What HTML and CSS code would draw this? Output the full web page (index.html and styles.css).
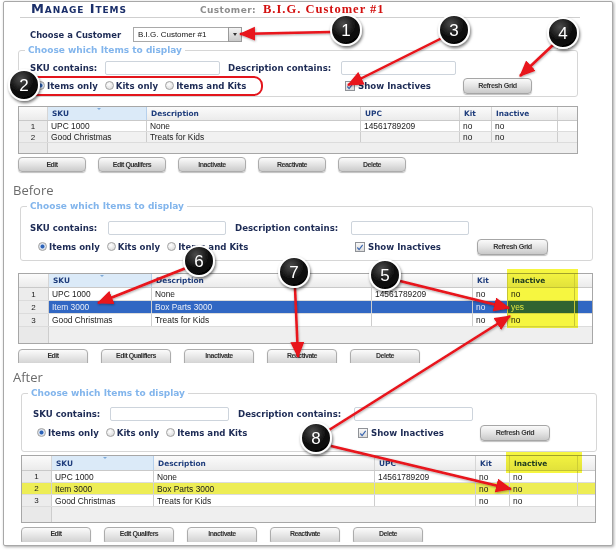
FILE: index.html
```html
<!DOCTYPE html>
<html>
<head>
<meta charset="utf-8">
<link rel="stylesheet" href="styles.css">
</head>
<body>
<div class="frame">
  <div class="titlebar">
    <div class="title">Manage Items</div>
    <div class="cust-lbl">Customer:</div>
    <div class="cust-name">B.I.G. Customer #1</div>
  </div>
  <div class="cust-row">
    <div class="cust-choose">Choose a Customer</div>
    <div class="select"><span class="select-txt">B.I.G. Customer #1</span><span class="select-btn"></span></div>
  </div>

  <fieldset class="filter f1">
    <legend>Choose which Items to display</legend>
    <div class="frow1">
      <span class="lbl lbl-sku">SKU contains:</span><span class="tin"></span>
      <span class="lbl lbl-desc">Description contains:</span><span class="tin"></span>
    </div>
    <div class="frow2">
      <div class="radios">
        <span class="opt"><span class="radio on"></span><span class="lbl">Items only</span></span>
        <span class="opt"><span class="radio"></span><span class="lbl">Kits only</span></span>
        <span class="opt"><span class="radio"></span><span class="lbl">Items and Kits</span></span>
      </div>
      <div class="chk"><span class="cbox"><svg width="9" height="9" viewBox="0 0 9 9"><path d="M1.5 4.5 L3.5 6.8 L7.5 1.5" fill="none" stroke="#3a66b0" stroke-width="1.3"/></svg></span><span class="lbl">Show Inactives</span></div>
      <div class="rbtn">Refresh Grid</div>
    </div>
  </fieldset>

  <div class="grid g1">
    <div class="grow ghead"><span></span><span class="skuh">SKU</span><span>Description</span><span>UPC</span><span>Kit</span><span>Inactive</span><span></span></div>
    <div class="grow"><span class="num">1</span><span>UPC 1000</span><span>None</span><span>14561789209</span><span>no</span><span>no</span><span></span></div>
    <div class="grow alt"><span class="num">2</span><span>Good Christmas</span><span>Treats for Kids</span><span></span><span>no</span><span>no</span><span></span></div>
    <div class="gempty"><span class="num"></span><span></span></div>
  </div>

  <div class="btns b1">
    <div class="btn">Edit</div><div class="btn">Edit Qualifers</div><div class="btn">Inactivate</div><div class="btn">Reactivate</div><div class="btn">Delete</div>
  </div>

  <div class="stitle">Before</div>

  <fieldset class="filter f2">
    <legend>Choose which Items to display</legend>
    <div class="frow1">
      <span class="lbl lbl-sku">SKU contains:</span><span class="tin"></span>
      <span class="lbl lbl-desc">Description contains:</span><span class="tin"></span>
    </div>
    <div class="frow2">
      <div class="radios">
        <span class="opt"><span class="radio on"></span><span class="lbl">Items only</span></span>
        <span class="opt"><span class="radio"></span><span class="lbl">Kits only</span></span>
        <span class="opt"><span class="radio"></span><span class="lbl">Items and Kits</span></span>
      </div>
      <div class="chk"><span class="cbox"><svg width="9" height="9" viewBox="0 0 9 9"><path d="M1.5 4.5 L3.5 6.8 L7.5 1.5" fill="none" stroke="#3a66b0" stroke-width="1.3"/></svg></span><span class="lbl">Show Inactives</span></div>
      <div class="rbtn">Refresh Grid</div>
    </div>
  </fieldset>

  <div class="grid g2">
    <div class="grow ghead"><span></span><span class="skuh">SKU</span><span>Description</span><span>UPC</span><span>Kit</span><span>Inactive</span><span></span></div>
    <div class="grow"><span class="num">1</span><span>UPC 1000</span><span>None</span><span>14561789209</span><span>no</span><span>no</span><span></span></div>
    <div class="grow sel"><span class="num">2</span><span>Item 3000</span><span>Box Parts 3000</span><span></span><span>no</span><span>yes</span><span></span></div>
    <div class="grow"><span class="num">3</span><span>Good Christmas</span><span>Treats for Kids</span><span></span><span>no</span><span>no</span><span></span></div>
    <div class="gempty"><span class="num"></span><span></span></div>
    <div class="ycol yc2"></div>
  </div>

  <div class="btns b2 clip">
    <div class="btn">Edit</div><div class="btn">Edit Qualifiers</div><div class="btn">Inactivate</div><div class="btn">Reactivate</div><div class="btn">Delete</div>
  </div>

  <div class="stitle st2">After</div>

  <fieldset class="filter f3">
    <legend>Choose which Items to display</legend>
    <div class="frow1">
      <span class="lbl lbl-sku">SKU contains:</span><span class="tin"></span>
      <span class="lbl lbl-desc">Description contains:</span><span class="tin"></span>
    </div>
    <div class="frow2">
      <div class="radios">
        <span class="opt"><span class="radio on"></span><span class="lbl">Items only</span></span>
        <span class="opt"><span class="radio"></span><span class="lbl">Kits only</span></span>
        <span class="opt"><span class="radio"></span><span class="lbl">Items and Kits</span></span>
      </div>
      <div class="chk"><span class="cbox"><svg width="9" height="9" viewBox="0 0 9 9"><path d="M1.5 4.5 L3.5 6.8 L7.5 1.5" fill="none" stroke="#3a66b0" stroke-width="1.3"/></svg></span><span class="lbl">Show Inactives</span></div>
      <div class="rbtn">Refresh Grid</div>
    </div>
  </fieldset>

  <div class="grid g3">
    <div class="grow ghead"><span></span><span class="skuh">SKU</span><span>Description</span><span>UPC</span><span>Kit</span><span>Inactive</span><span></span></div>
    <div class="grow"><span class="num">1</span><span>UPC 1000</span><span>None</span><span>14561789209</span><span>no</span><span>no</span><span></span></div>
    <div class="grow hl"><span class="num">2</span><span>Item 3000</span><span>Box Parts 3000</span><span></span><span>no</span><span>no</span><span></span></div>
    <div class="grow"><span class="num">3</span><span>Good Christmas</span><span>Treats for Kids</span><span></span><span>no</span><span>no</span><span></span></div>
    <div class="gempty"><span class="num"></span><span></span></div>
    <div class="ycol yc3"></div>
  </div>

  <div class="btns b3 clip">
    <div class="btn">Edit</div><div class="btn">Edit Qualifers</div><div class="btn">Inactivate</div><div class="btn">Reactivate</div><div class="btn">Delete</div>
  </div>
</div>

<svg class="overlay" width="616" height="550" viewBox="0 0 616 550">
  <defs>
    <radialGradient id="cg" cx="40%" cy="30%" r="75%">
      <stop offset="0" stop-color="#4d4d4d"/>
      <stop offset="0.55" stop-color="#111"/>
      <stop offset="1" stop-color="#000"/>
    </radialGradient>
    <marker id="ah" markerUnits="userSpaceOnUse" markerWidth="17" markerHeight="15" refX="15" refY="7" orient="auto">
      <path d="M0,0 L16,7 L0,14 z" fill="#e8121a"/>
    </marker>
    <filter id="sh" x="-40%" y="-40%" width="180%" height="180%">
      <feDropShadow dx="1" dy="2" stdDeviation="1.5" flood-color="#000" flood-opacity="0.55"/>
    </filter>
    <filter id="ash" x="-10%" y="-10%" width="120%" height="120%">
      <feDropShadow dx="0.5" dy="1" stdDeviation="0.8" flood-color="#000" flood-opacity="0.35"/>
    </filter>
  </defs>
  <rect x="20" y="77" width="242" height="18" rx="8" fill="none" stroke="#e3151c" stroke-width="2"/>
  <g stroke="#e8121a" stroke-width="2.5" fill="none" marker-end="url(#ah)" filter="url(#ash)">
    <line x1="331" y1="32" x2="240" y2="34"/>
    <line x1="442" y1="38" x2="348" y2="85"/>
    <line x1="554" y1="44" x2="520" y2="76"/>
    <line x1="186" y1="268" x2="98" y2="303"/>
    <line x1="295" y1="288" x2="298" y2="357"/>
    <line x1="400" y1="281" x2="509" y2="308"/>
    <line x1="329" y1="430" x2="510" y2="316"/>
    <line x1="331" y1="446" x2="511" y2="489"/>
  </g>
  <g filter="url(#sh)" class="callouts">
    <circle cx="346" cy="30" r="15"/>
    <circle cx="454" cy="30" r="15"/>
    <circle cx="563" cy="33" r="15"/>
    <circle cx="24" cy="85" r="15"/>
    <circle cx="199" cy="261" r="15"/>
    <circle cx="294" cy="272" r="15"/>
    <circle cx="385" cy="275" r="15"/>
    <circle cx="316" cy="438" r="15"/>
  </g>
  <g class="cnum">
    <text x="346" y="36">1</text>
    <text x="454" y="36">3</text>
    <text x="563" y="39">4</text>
    <text x="24" y="91">2</text>
    <text x="199" y="267">6</text>
    <text x="294" y="278">7</text>
    <text x="385" y="281">5</text>
    <text x="316" y="444">8</text>
  </g>
</svg>
</body>
</html>
```

FILE: styles.css
```css
* { box-sizing: border-box; }
html, body { margin: 0; padding: 0; background: #fff; }
body {
  position: relative;
  width: 616px;
  height: 550px;
  overflow: hidden;
  font-family: "DejaVu Sans", Verdana, sans-serif;
}

.frame {
  margin: 1px 0 0 3px;
  width: 610px;
  height: 545px;
  border: 1px solid #a8a8a8;
  border-radius: 2px;
  background: #fff;
  box-shadow: 1px 1px 3px rgba(0,0,0,0.35);
  overflow: hidden;
}

/* ---------- title ---------- */
.titlebar {
  display: flex;
  align-items: flex-end;
  margin-left: 16px;
  width: 560px;
  height: 16px;
  border-bottom: 1px solid #cfcfcf;
  padding-bottom: 1px;
}
.title {
  width: 180px;
  padding-left: 11px;
  font: bold 13px/14px "DejaVu Sans", sans-serif;
  font-variant: small-caps;
  letter-spacing: 0.9px;
  color: #1b2f6a;
}
.cust-lbl {
  width: 63px;
  font: bold 9px/12px "DejaVu Sans", sans-serif;
  letter-spacing: 0.4px;
  color: #8d8d8d;
}
.cust-name {
  font: bold 12.5px/13px "Liberation Serif", serif;
  letter-spacing: 1px;
  color: #d3100f;
}

.cust-row {
  display: flex;
  align-items: center;
  margin: 9px 0 0 26px;
  height: 15px;
}
.cust-choose {
  width: 103px;
  font: bold 8.4px "DejaVu Sans", sans-serif;
  color: #1d2b55;
}
.select {
  display: flex;
  height: 15px;
}
.select-txt {
  width: 95px;
  height: 15px;
  border: 1px solid #a9a9a9;
  border-right: none;
  background: #fff;
  font: 8px/13px "Liberation Sans", sans-serif;
  color: #111;
  padding-left: 4px;
}
.select-btn {
  position: relative;
  width: 14px;
  height: 15px;
  border: 1px solid #9a9a9a;
  background: linear-gradient(#f4f4f4, #c9c9c9);
}
.select-btn::after {
  content: "";
  position: absolute;
  left: 4px;
  top: 5px;
  border-left: 2.5px solid transparent;
  border-right: 2.5px solid transparent;
  border-top: 3px solid #333;
}

/* ---------- filter fieldsets ---------- */
.filter {
  margin: 3px 0 0 var(--fx);
  width: var(--fw);
  padding: 0 0 var(--pb) 0;
  border: 1px solid #d6d6d6;
  border-radius: 3px;
  min-width: 0;
}
.filter legend {
  margin-left: 6px;
  padding: 0 3px;
  font: bold 9px/10px "DejaVu Sans", sans-serif;
  color: #82b5ec;
}
.f1 { --fx: 14px; --fw: 560px; --pl: 11px; --skuw: 75px; --inw: 115px; --gap: 8px; --descw: 113px; --r1mt: 6px; --pl2: 17px; --radw: 309px; --chkw: 118px; --btnw: 69px; --r2mt: 2px; --pb: 2px; }
.f2 { --fx: 16px; --fw: 573px; --pl: 9px; --skuw: 78px; --inw: 118px; --gap: 9px; --descw: 116px; --r1mt: 10px; --pl2: 17px; --radw: 317px; --chkw: 122px; --btnw: 71px; --r2mt: 3px; --pb: 5px; }
.f3 { --fx: 17px; --fw: 576px; --pl: 11px; --skuw: 77px; --inw: 119px; --gap: 9px; --descw: 116px; --r1mt: 9px; --pl2: 15px; --radw: 321px; --chkw: 122px; --btnw: 70px; --r2mt: 3px; --pb: 10px; }

.frow1 {
  display: flex;
  align-items: center;
  height: 14px;
  margin-top: var(--r1mt);
  padding-left: var(--pl);
}
.lbl {
  font: bold 8.6px "DejaVu Sans", sans-serif;
  color: #1d2b55;
  white-space: nowrap;
}
.lbl-sku { width: var(--skuw); }
.lbl-desc { width: var(--descw); margin-left: var(--gap); }
.tin {
  width: var(--inw);
  height: 14px;
  border: 1px solid #cdd4dc;
  border-radius: 2px;
  background: #fff;
}
.frow2 {
  display: flex;
  align-items: center;
  height: 17px;
  margin-top: var(--r2mt);
  padding-left: var(--pl2);
}
.radios {
  width: var(--radw);
  display: flex;
  align-items: center;
}
.opt {
  display: flex;
  align-items: center;
  gap: 2px;
  margin-right: 7px;
}
.radio {
  width: 9px;
  height: 9px;
  border-radius: 50%;
  border: 1px solid #a3a3a3;
  background: radial-gradient(circle at 40% 35%, #ffffff, #d4d4d4);
}
.radio.on {
  background: radial-gradient(circle, #2d63b8 0, #2d63b8 1.6px, #dfe8f5 2.4px, #c9c9c9 100%);
}
.chk {
  width: var(--chkw);
  display: flex;
  align-items: center;
  gap: 3px;
}
.cbox {
  display: flex;
  width: 10px;
  height: 10px;
  border: 1px solid #8f9297;
  background: linear-gradient(#f8f8f8, #dcdcdc);
}
.cbox svg { display: block; }
.rbtn {
  width: var(--btnw);
  height: 16px;
  border: 1px solid #a6a6a6;
  border-radius: 4px;
  background: linear-gradient(#fafafa, #e4e4e4 50%, #c9c9c9);
  box-shadow: 0 1px 1px rgba(0,0,0,0.25);
  display: flex;
  align-items: center;
  justify-content: center;
  font: bold 7.2px "Liberation Sans", sans-serif;
  letter-spacing: -0.4px;
  color: #3a3a3a;
}

/* ---------- grids ---------- */
.grid {
  position: relative;
  border: 1px solid #a7a7a7;
  background: #fff;
}
.g1 { margin: 9px 0 0 14px; width: 560px; --cols: 29px 99px 214px 99px 32px 66px 1fr; --numw: 29px; --hh: 14px; --rh: 11px; --eh: 10px; }
.g2 { margin: 12px 0 0 14px; width: 575px; --cols: 30px 103px 220px 101px 35px 67px 1fr; --numw: 30px; --hh: 14px; --rh: 13px; --eh: 16px; }
.g3 { margin: 3px 0 0 17px; width: 575px; --cols: 30px 102px 221px 101px 34px 68px 1fr; --numw: 30px; --hh: 15px; --rh: 12px; --eh: 15px; }

.grow {
  display: grid;
  grid-template-columns: var(--cols);
  height: var(--rh);
  border-bottom: 1px solid #dcdcdc;
}
.grow > span {
  display: flex;
  align-items: center;
  padding-left: 3px;
  border-right: 1px solid #cdcdcd;
  font: 8.4px "Liberation Sans", sans-serif;
  color: #1a1a1a;
  white-space: nowrap;
  overflow: hidden;
}
.grow > span:last-child { border-right: none; }
.grow > .num {
  justify-content: center;
  padding-left: 0;
  background: #ececec;
  font-size: 8px;
}
.grow.alt > span { background: #f1f1f1; }
.grow.alt > .num { background: #ececec; }

.ghead {
  height: var(--hh);
  background: linear-gradient(#fbfbfb, #ebebeb);
  border-bottom: 1px solid #c9c9c9;
}
.ghead > span {
  padding-left: 4px;
  font: bold 7.4px "DejaVu Sans", sans-serif;
  color: #1f3d7c;
  border-right: 1px solid #d6d6d6;
}
.ghead > .skuh {
  position: relative;
  background: #dbeaf8;
  border-right: 1px solid #b6d0ec;
}
.skuh::before {
  content: "";
  position: absolute;
  left: 50%;
  top: 1px;
  border-left: 2px solid transparent;
  border-right: 2px solid transparent;
  border-top: 2px solid #7ea9d8;
}

.grow.sel > span { background: #3167c3; color: #e9eef8; }
.grow.sel > .num { background: #ececec; color: #1a1a1a; }
.grow.hl { background: #eded55; }
.grow.hl > span, .grow.hl > .num { background: transparent; }

.gempty {
  display: grid;
  grid-template-columns: var(--numw) 1fr;
  height: var(--eh);
  background: #efefef;
}
.gempty .num { background: #e9e9e9; border-right: 1px solid #cdcdcd; }

.ycol {
  position: absolute;
  background: #f6f640;
  mix-blend-mode: multiply;
}
.yc2 { left: 488px; top: -5px; width: 71px; height: 59px; }
.yc3 { left: 484px; top: -4px; width: 76px; height: 21px; }

/* ---------- buttons ---------- */
.btns {
  display: flex;
  align-items: flex-start;
}
.b1 { margin: 3px 0 0 14px; gap: 12px; --bw: 68px; --bh: 15px; }
.b2 { margin: 5px 0 0 14px; gap: 13px; --bw: 70px; --bh: 18px; height: 14px; }
.b3 { margin: 4px 0 0 17px; gap: 13px; --bw: 70px; --bh: 18px; height: 15px; }
.btns.clip { overflow: hidden; }
.btn {
  flex: none;
  width: var(--bw);
  height: var(--bh);
  border: 1px solid #acacac;
  border-radius: 4px;
  background: linear-gradient(#fbfbfb, #e6e6e6 45%, #cbcbcb);
  box-shadow: 0 1px 1px rgba(0,0,0,0.25);
  display: flex;
  align-items: center;
  justify-content: center;
  font: bold 7px "Liberation Sans", sans-serif;
  letter-spacing: -0.5px;
  color: #333;
}
.btns.clip .btn { align-items: flex-start; padding-top: 2px; }

.stitle {
  margin: 10px 0 0 9px;
  font: 13px/16px "Open Sans", sans-serif;
  color: #6b6b6b;
}
.stitle.st2 { margin-top: 6px; }

/* ---------- callout overlay ---------- */
.overlay {
  position: absolute;
  left: 0;
  top: 0;
  pointer-events: none;
}
.callouts circle {
  fill: url(#cg);
  stroke: #fff;
  stroke-width: 2;
}
.cnum text {
  font: 17px "Liberation Sans", Arial, sans-serif;
  fill: #fff;
  text-anchor: middle;
}
```
